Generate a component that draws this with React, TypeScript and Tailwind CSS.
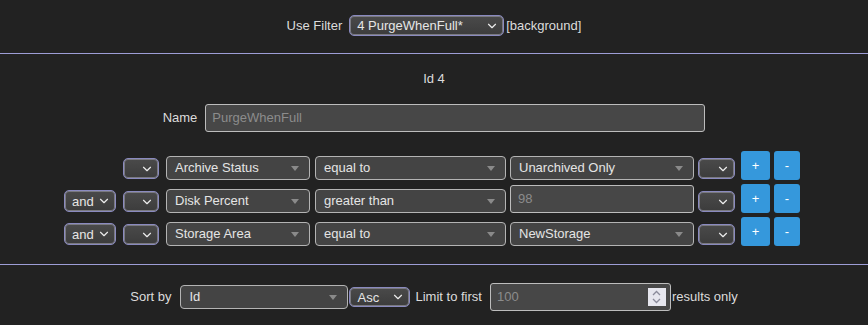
import { ChevronDown } from 'lucide-react';

// ============================================
// PIEZAS
// ============================================

function NativeSelect({ value = '', className = '' }: { value?: string; className?: string }) {
  return (
    <div
      className={`flex items-center justify-between rounded-[5px] border border-[#8a8abf] bg-gradient-to-b from-[#4a4a4a] to-[#3c3c3c] pl-[7px] pr-[4px] text-[13px] text-[#e6e6e6] shadow-[inset_0_0_0_1px_#7a7a80] ${className}`}
    >
      <span className="leading-none">{value}</span>
      <ChevronDown className="h-[14px] w-[14px] text-[#ececec]" strokeWidth={2} />
    </div>
  );
}

function FieldSelect({ value, className = '' }: { value: string; className?: string }) {
  return (
    <div
      className={`flex items-center justify-between rounded-[4px] border border-[#b4b4b4] bg-[#444444] pl-[8px] pr-[10px] text-[13px] text-[#e4e4e4] ${className}`}
    >
      <span>{value}</span>
      <svg width="8" height="5" viewBox="0 0 8 5">
        <path d="M0 0 L8 0 L4 5 Z" fill="#8a8a8a" />
      </svg>
    </div>
  );
}

function Boton({ label, className = '' }: { label: string; className?: string }) {
  return (
    <div
      className={`flex h-[29px] items-center justify-center rounded-[3px] bg-[#3598dc] text-[13px] text-white ${className}`}
    >
      {label}
    </div>
  );
}

interface Fila {
  conector: boolean;
  campo: string;
  operador: string;
  valor: string;
  esInput?: boolean;
}

const filas: Fila[] = [
  { conector: false, campo: 'Archive Status', operador: 'equal to', valor: 'Unarchived Only' },
  { conector: true, campo: 'Disk Percent', operador: 'greater than', valor: '98', esInput: true },
  { conector: true, campo: 'Storage Area', operador: 'equal to', valor: 'NewStorage' },
];

// ============================================
// COMPONENTE
// ============================================

export default function App() {
  return (
    <div
      className="h-[325px] w-[868px] overflow-hidden bg-[#222222] text-[13px] text-[#dcdcdc]"
      style={{ fontFamily: '"Liberation Sans", Arial, sans-serif' }}
    >
      {/* Filtro */}
      <div className="flex h-[53px] items-center justify-center pb-[2px]">
        <span>Use Filter</span>
        <NativeSelect value="4 PurgeWhenFull*" className="ml-[7px] h-[21px] w-[155px]" />
        <span className="ml-[2px]">[background]</span>
      </div>

      <div className="border-t border-[#9d9dd6]" />

      {/* Detalle */}
      <div className="h-[210px] pt-[17px]">
        <div className="text-center leading-[16px]">Id 4</div>

        <div className="mt-[17px] flex items-center justify-center">
          <span className="mr-[8px]">Name</span>
          <div className="flex h-[28px] w-[500px] items-center rounded-[3px] border border-[#bdbdbd] bg-[#474747] pl-[6px] text-[#8c8c8c]">
            PurgeWhenFull
          </div>
        </div>

        <div className="mt-[19px] pl-[64px]">
          {filas.map((f, idx) => (
            <div key={idx} className="flex h-[33px] items-start">
              <div className="w-[59px]">
                {f.conector && <NativeSelect value="and" className="mt-[6px] h-[22px] w-[52px]" />}
              </div>
              <NativeSelect className="mt-[7px] h-[21px] w-[36px]" />
              <FieldSelect value={f.campo} className="ml-[7px] mt-[5px] h-[24px] w-[144px]" />
              <FieldSelect value={f.operador} className="ml-[5px] mt-[5px] h-[24px] w-[191px]" />
              {f.esInput ? (
                <div className="ml-[4px] mt-[1px] flex h-[28px] w-[184px] items-center rounded-[3px] border border-[#bdbdbd] bg-[#474747] pl-[7px] text-[#8c8c8c]">
                  {f.valor}
                </div>
              ) : (
                <FieldSelect value={f.valor} className="ml-[4px] mt-[5px] h-[24px] w-[184px]" />
              )}
              <NativeSelect className="ml-[4px] mt-[7px] h-[21px] w-[37px]" />
              <Boton label="+" className="ml-[6px] w-[29px]" />
              <Boton label="-" className="ml-[4px] w-[26px]" />
            </div>
          ))}
        </div>
      </div>

      <div className="border-t border-[#9d9dd6]" />

      {/* Orden */}
      <div className="flex items-center justify-center pt-[18px]">
        <span>Sort by</span>
        <FieldSelect value="Id" className="ml-[9px] h-[24px] w-[168px]" />
        <NativeSelect value="Asc" className="ml-[1px] h-[20px] w-[61px]" />
        <span className="ml-[5px]">Limit to first</span>
        <div className="ml-[8px] flex h-[28px] w-[181px] items-center justify-between rounded-[3px] border border-[#bdbdbd] bg-[#474747] pl-[6px] pr-[4px] text-[#8c8c8c]">
          <span>100</span>
          <div className="flex h-[18px] w-[18px] flex-col items-center justify-center bg-[#e6e6ee]">
            <svg width="9" height="14" viewBox="0 0 9 14">
              <path d="M1 5 L4.5 1.5 L8 5" fill="none" stroke="#8a8a9a" strokeWidth="1.3" />
              <path d="M1 9 L4.5 12.5 L8 9" fill="none" stroke="#8a8a9a" strokeWidth="1.3" />
            </svg>
          </div>
        </div>
        <span className="ml-[1px]">results only</span>
      </div>
    </div>
  );
}
